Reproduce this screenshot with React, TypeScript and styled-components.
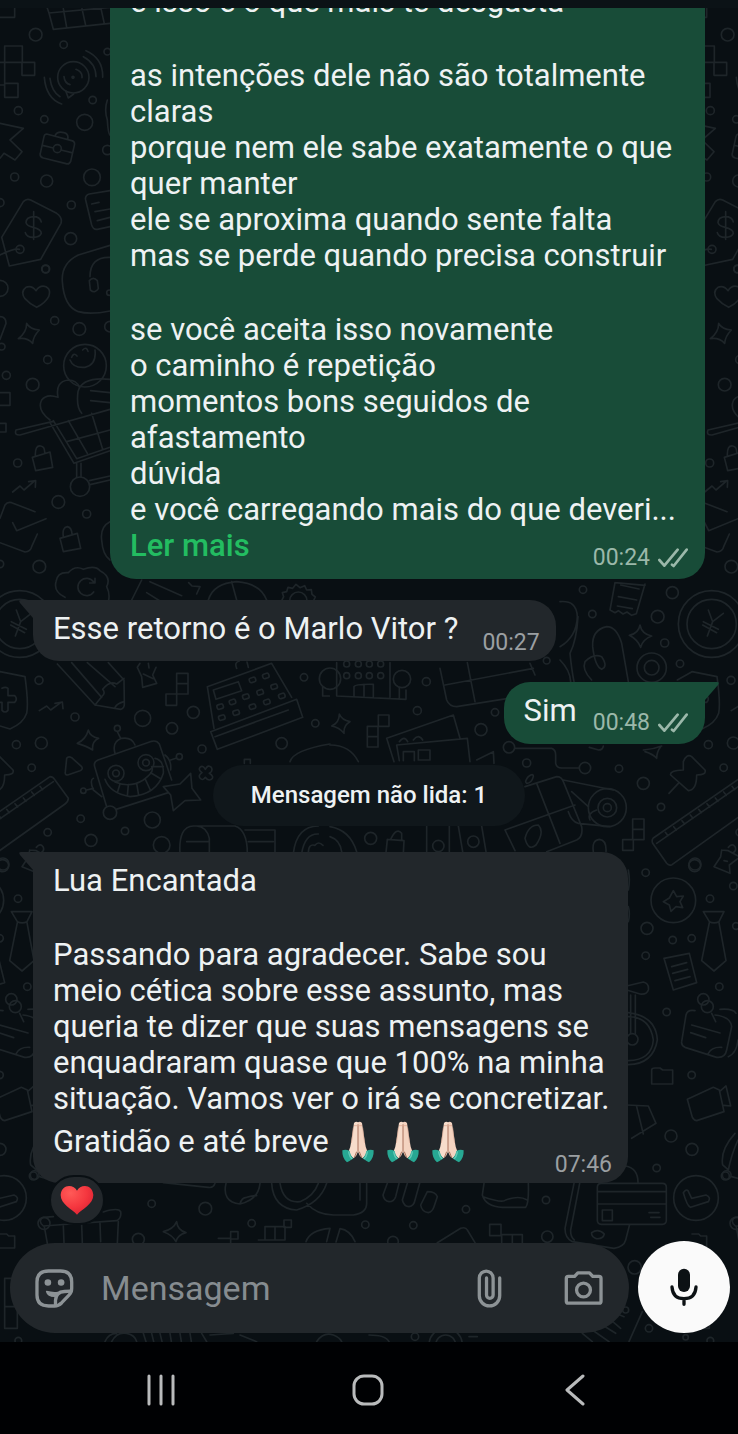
import React from "react";
import styled, { createGlobalStyle } from "styled-components";

const color = {
  page: "#090f13",
  doodle: "#1e2529",
  outgoing: "#184c38",
  incoming: "#22272b",
  text: "#eef2f3",
  mutedOut: "#9bb8aa",
  mutedIn: "#9b9fa2",
  icon: "#8d9396",
  link: "#23bd61",
};

const GlobalStyle = createGlobalStyle`
  * { box-sizing: border-box; }
  body {
    margin: 0;
    background: ${color.page};
    font-family: Roboto, "Liberation Sans", sans-serif;
    color: ${color.text};
  }
  button, input { font: inherit; color: inherit; }
`;

const Screen = styled.div`
  display: flex;
  flex-direction: column;
  height: 100vh;
`;

const TopEdge = styled.div`
  flex: none;
  height: 8px;
  background: #0b1216;
`;

const Chat = styled.main`
  position: relative;
  flex: 1;
  min-height: 0;
  display: flex;
  flex-direction: column;
  overflow: hidden;
`;

const Wallpaper = styled.svg`
  position: absolute;
  inset: 0;
  width: 100%;
  height: 100%;
  fill: none;
  stroke: ${color.doodle};
  stroke-width: 5;
  stroke-linecap: round;
  stroke-linejoin: round;
`;

const Messages = styled.section`
  position: relative;
  flex: 1;
  min-height: 0;
  display: flex;
  flex-direction: column;
  justify-content: flex-end;
  gap: 21px;
  padding: 0 33px 58px;
`;

const Bubble = styled.article<{ $out?: boolean; $wide?: boolean; $inline?: boolean }>`
  position: relative;
  flex: none;
  display: flex;
  flex-direction: ${(p) => (p.$inline ? "row" : "column")};
  align-items: ${(p) => (p.$inline ? "flex-end" : "stretch")};
  gap: ${(p) => (!p.$inline ? 0 : p.$out ? 16 : 24)}px;
  align-self: ${(p) => (p.$out ? "flex-end" : "flex-start")};
  width: ${(p) => (p.$wide ? "calc(100% - 77px)" : "auto")};
  padding: ${(p) => (p.$out ? "11px 17px 7px 20px" : "11px 16px 4px 20px")};
  border-radius: 26px;
  border-top-left-radius: ${(p) => (p.$out ? 26 : 0)}px;
  border-top-right-radius: ${(p) => (p.$out ? 0 : 26)}px;
  background: ${(p) => (p.$out ? color.outgoing : color.incoming)};
`;

const TailShape = styled.svg<{ $out?: boolean }>`
  position: absolute;
  top: 0;
  ${(p) => (p.$out ? "left: 100%;" : "right: 100%; transform: scaleX(-1);")}
  width: 14px;
  height: 18px;
  fill: ${(p) => (p.$out ? color.outgoing : color.incoming)};
`;

const Body = styled.div<{ $gap?: number }>`
  font-size: 31px;
  line-height: 36px;
  margin-bottom: ${(p) => p.$gap ?? -20}px;
`;

const Stanza = styled.p`
  margin: 0 0 38px;
  white-space: pre-line;
  &:last-child { margin-bottom: 0; }
`;

const ReadMore = styled.button`
  display: block;
  padding: 0;
  border: 0;
  background: none;
  color: ${color.link};
  font-weight: 500;
  line-height: 36px;
  cursor: pointer;
`;

const Meta = styled.footer<{ $out?: boolean }>`
  display: flex;
  align-items: center;
  justify-content: flex-end;
  gap: 8px;
  font-size: 23px;
  line-height: 28px;
  color: ${(p) => (p.$out ? color.mutedOut : color.mutedIn)};
`;

const UnreadPill = styled.div`
  flex: none;
  align-self: center;
  margin-bottom: 5px;
  padding: 16px 38px 17px;
  border-radius: 31px;
  background: #10171b;
  font-size: 24px;
  font-weight: 500;
  line-height: 28px;
`;

const Reaction = styled.button`
  position: absolute;
  left: 16px;
  top: calc(100% - 8px);
  display: grid;
  place-items: center;
  width: 56px;
  height: 50px;
  padding: 0;
  border: 2px solid ${color.page};
  border-radius: 25px;
  background: ${color.incoming};
`;

const Hands = styled.svg`
  width: 45px;
  height: 42px;
  margin: 4px 0 8px;
  vertical-align: middle;
`;

const Composer = styled.form`
  position: relative;
  flex: none;
  display: flex;
  align-items: flex-end;
  gap: 9px;
  padding: 0 8px 9px 10px;
`;

const InputBar = styled.div`
  flex: 1;
  min-width: 0;
  height: 90px;
  display: flex;
  align-items: center;
  padding: 0 24px 0 22px;
  border-radius: 45px;
  background: ${color.incoming};
`;

const TextField = styled.input`
  flex: 1;
  min-width: 0;
  margin: 0 22px 0 25px;
  padding: 0;
  border: 0;
  outline: 0;
  background: none;
  font-size: 34px;
  line-height: 44px;
  &::placeholder { color: #868c90; opacity: 1; }
`;

const IconButton = styled.button`
  flex: none;
  display: grid;
  place-items: center;
  width: 44px;
  height: 44px;
  padding: 0;
  border: 0;
  background: none;
  color: ${color.icon};
  & + & { margin-left: 50px; }
`;

const MicButton = styled.button`
  flex: none;
  display: grid;
  place-items: center;
  width: 92px;
  height: 92px;
  padding: 0;
  border: 0;
  border-radius: 50%;
  background: #fafafa;
  color: #0c1114;
`;

const SystemNav = styled.nav`
  flex: none;
  display: flex;
  height: 92px;
  padding: 3px 60px 0 57px;
  background: #000103;
`;

const NavButton = styled.button`
  flex: 1;
  display: grid;
  place-items: center;
  padding: 0;
  border: 0;
  background: none;
  color: #b9bbbc;
`;

const LineIcon = styled.svg`
  fill: none;
  stroke: currentColor;
  stroke-linecap: round;
  stroke-linejoin: round;
`;

type Patch = {
  x: number;
  y: number;
  circles: number[][];
  paths: string[];
};

/* Each patch of the wallpaper is drawn on a grid three times finer than the page. */
const patches: Patch[] = [
  {
    x: 0,
    y: 0,
    circles: [
      [107, 104, 19], [191, 134, 11], [55, 332, 12], [133, 358, 11], [254, 367, 24], [44, 531, 12],
      [140, 543, 18], [276, 532, 25], [214, 615, 12], [212, 716, 18], [137, 807, 12], [278, 300, 11],
      [322, 155, 10], [322, 450, 14], [0, 608, 12], [0, 865, 24], [220, 232, 47], [219, 232, 3],
      [172, 446, 12], [60, 748, 12],
    ],
    paths: [
      "M142 25l5 14L330 22M147 39L160 88L330 70M190 26L200 82M246 26L257 76M303 26l10 45M0 52H44V24",
      "M14 138H67V187H104V226H66V187H14ZM14 187V250H54V292H14V250M0 187H14M14 255H0",
      "M197 272l8 22l16-12M258 152Q310 175 308 232M250 170Q288 190 288 230M133 232Q138 295 185 312M150 235Q155 275 180 290M228 208q20 8 18 25M192 230q2 20 18 24",
      "M140 402L215 422Q226 425 223 436L212 484Q208 494 198 491L130 474Q118 470 121 460L132 410Q134 402 140 402ZM165 407Q172 392 192 398Q207 402 203 418M128 436L160 444M183 450L215 458",
      "M0 370L70 385L30 420L66 455L45 480L12 460L0 475",
      "M92 600L170 640Q188 652 183 670L122 778L28 798L5 712L70 605Q80 594 92 600ZM124 666Q120 650 100 650Q78 652 78 668Q80 678 100 682Q124 688 124 700Q120 712 100 712Q80 712 76 698M101 635V718M58 748Q40 745 0 765",
      "M330 572L268 582Q254 586 257 600L275 675Q280 690 292 688L330 680M275 612l22-5M285 635l45-8M292 662l38-10",
      "M322 300q-10 30 0 60q2 40 8 45",
    ],
  },
  {
    x: 0,
    y: 250,
    circles: [
      [137, 57, 11], [164, 212, 12], [238, 237, 19], [143, 329, 12], [98, 404, 19], [19, 376, 12],
      [53, 639, 12], [175, 756, 19], [260, 792, 12], [118, 950, 19], [0, 942, 11], [328, 128, 8],
      [330, 230, 16], [255, 347, 64], [240, 710, 29], [5, 290, 10],
    ],
    paths: [
      "M330-14L235 15Q183 40 187 95Q192 170 235 185Q270 195 330 183M330 22Q270 20 270 80M268 92q12-14 24 0l3 24q-10 16-24 4Z",
      "M108 122Q95 105 78 112Q60 125 75 146Q90 163 110 172Q135 160 146 140Q154 118 138 110Q120 104 108 122Z",
      "M80 220Q90 238 118 240Q100 258 98 280Q82 262 55 266Q80 248 80 220ZM0 200Q18 200 18 220L0 268",
      "M0 428H30V466H0M0 520H18V546H0",
      "M210 330Q220 355 255 352Q290 345 285 300M215 322q6-16 16-4M248 300q12-12 16 4",
      "M150 510Q110 480 125 450Q140 430 174 442Q165 395 205 390Q230 390 238 412M330 388Q245 380 234 425Q228 470 245 490M272 422l58 6M272 452l58 6",
      "M330 478L60 555Q42 556 48 540L160 514M150 518L222 640L330 602M160 512L230 626L330 592M205 512L262 610M275 490L308 598M200 575L330 540M230 640v42M243 640v40M268 692l62-14M270 704l60-14",
      "M97 622L150 606L158 652L107 662ZM106 617Q105 585 122 588Q135 590 134 609",
      "M38 726L60 708L72 720L102 694M86 695L107 692L106 712",
      "M0 805L15 765Q22 755 35 758L105 785M38 818L50 842L138 806M0 878L75 906Q92 905 95 890L112 852",
      "M180 865L232 850L242 895L190 905ZM190 860Q186 832 202 830Q215 832 216 853",
      "M195 1042Q160 1025 168 995Q172 965 205 968Q225 945 250 958Q285 945 300 962Q335 980 320 1010Q330 1030 326 1050M281 996A26 26 0 1 0 281 1026M285 985v14h-16",
      "M330 815Q300 830 305 870Q308 915 330 930",
    ],
  },
  {
    x: 560,
    y: 480,
    circles: [
      [69, 329, 11], [337, 338, 18], [97, 402, 11], [293, 410, 19], [314, 489, 12], [360, 551, 11],
      [275, 563, 44], [275, 563, 22], [455, 432, 100], [455, 432, 74],
    ],
    paths: [
      "M445 390L458 425L490 400M458 425L442 468M430 425L475 448M428 435L470 458",
      "M165 308L150 390l15 8l10-6l14 10l12-6l14 10l14-5L255 312M182 315l55 12M175 350l55 10M172 378l45 8M165 308l90 8",
      "M240 435Q245 462 275 468Q248 478 242 502Q232 478 208 466Q236 460 240 435Z",
      "M0 365Q50 360 52 410Q50 470 0 500M54 410Q50 480 30 520Q35 570 42 605",
      "M205 605L185 490Q170 440 140 440Q95 450 98 500Q105 560 125 568Q145 560 125 530Q100 520 75 545Q65 570 95 600",
      "M352 600L396 575",
    ],
  },
  {
    x: 0,
    y: 580,
    circles: [
      [117, 301, 12], [225, 411, 12], [49, 494, 12], [124, 489, 18], [95, 563, 11], [428, 415, 24],
      [516, 445, 17], [580, 397, 18], [606, 507, 12], [352, 445, 9], [538, 530, 9], [250, 632, 8],
      [330, 698, 20], [457, 720, 24], [375, 753, 11], [242, 716, 11], [143, 757, 11], [273, 781, 18],
      [485, 795, 25], [912, 292, 11], [845, 490, 17], [946, 430, 11], [348, 580, 24], [348, 580, 10],
      [438, 548, 24], [438, 548, 10], [895, 62, 26], [990, 296, 32],
    ],
    paths: [
      "M0 275L75 290Q86 370 80 400Q70 430 30 447L0 438M6 325q10-6 18 0v22h20q10 10 0 20h-20v24q-9 10-18 0v-24h-6",
      "M118 392l22-14l12 12l30-22M165 370l22-4l2 20",
      "M172 252L285 375L362 388Q374 385 373 370L372 300L325 248M215 248L305 352M262 248L345 320M285 375L305 350Q318 340 308 328Q330 300 350 312L372 295M345 382Q352 370 372 365",
      "M412 262L425 290L428 322L470 310L458 285L468 262M420 250l-8 12M445 250l2 14M430 282l30 14",
      "M530 280h34v62h-34zM530 311h34M498 342h32v34h-32z",
      "M642 445L622 320L815 250L875 352M632 455L652 508L908 412L890 358ZM645 470L865 390M640 330L715 305L725 332L648 358ZM710 265q-8-18 8-22M745 262l-4-16",
      "M265 450Q270 470 296 475Q275 485 278 510Q260 498 232 490Q258 478 265 450Z",
      "M200 535Q205 528 215 533L245 560Q250 568 240 572L203 585Q194 585 196 575Z",
      "M320 680L284 560Q280 546 294 540L455 484Q470 480 478 492L515 600M348 688L505 638M345 520Q335 485 365 475Q395 470 405 495M352 455L362 475",
      "M315 598Q330 640 390 650Q470 645 490 580Q492 540 465 535M345 606Q390 625 430 600Q465 575 455 560M360 612l-8 26M385 614l-3 34M410 610l6 36M435 596l16 34M452 578l30 18M458 560h32M280 595Q268 600 280 630L305 650M260 630l20-5M495 525Q515 540 512 570M512 540l18-6",
      "M520 692L512 645L490 620L540 612L572 580L576 625L602 660L555 662Z",
      "M600 562q8-8 16 6q8-16 18-6q6 12-6 18q16 10 6 18q-10 6-18-6q-8 12-16 2q-6-8 6-16q-12-8-6-16",
      "M-116 774L150 590Q160 590 165 600L205 655Q205 665 195 672L-60 854Q-70 858 -76 850L-118 790Q-122 780 -116 774M-106 790L160 605M-80 757l8 10M-55 740l8 10M-30 722l8 10M-5 705l8 10M20 688l8 10M45 671l8 10M70 654l8 10M95 636l8 10M120 619l8 10",
      "M540 820Q535 740 580 738H705Q742 750 742 820M628 820V775Q620 740 590 738M560 785h65M735 750h90v70M745 785h75M880 820Q890 738 955 738M905 820Q915 760 955 762M925 820q0-30 20-24q10-14 24 0",
      "M395 60L425 0M440 38l40 25M450 5l95 42M590 42l10-22l-24-2l-10-10M625 60Q640 10 710 5Q780 10 800 60M695 5l15 55",
      "M845 62l6-12l-4-12l13-3l4-13l14 3l10-12l12 10l14-6l6 13l14-1l2 14l10 8l-6 12",
      "M870 545Q880 510 990 492M733 550v-12h18v12M968 320v28h20",
    ],
  },
  {
    x: 330,
    y: 640,
    circles: [
      [289, 125, 12], [262, 212, 12], [453, 269, 18], [537, 322, 17], [495, 217, 11], [590, 369, 12],
      [765, 384, 17], [940, 430, 18], [993, 501, 11], [867, 386, 11], [122, 595, 18], [325, 618, 17],
      [430, 605, 17], [832, 503, 57], [832, 503, 28], [832, 503, 12], [1095, 672, 18], [216, 117, 26],
      [50, 72, 9], [85, 72, 9], [118, 72, 9], [152, 72, 9], [50, 107, 9], [85, 107, 9],
      [118, 107, 9], [152, 107, 9], [650, 62, 10],
    ],
    paths: [
      "M20 68V168L228 178V150M180 68V172M208 142v34M72 168V140Q75 132 130 133V170M102 133v35",
      "M330 85L350 180Q358 200 380 200L535 175M345 135L610 85M412 68L435 185M600 70L615 105M690 60q30 30 32 65",
      "M28 222Q35 240 60 245Q40 255 42 280Q28 262 5 258Q28 248 28 222Z",
      "M145 225h32v34h-32zM112 259h32v62h-32zM112 290h32",
      "M192 365L170 295L370 225L390 295M208 362L200 315L412 295L420 365M220 362v-27h33v27M265 330h35v30h-35zM208 305q15-20 25 0M250 300q15-20 28 0M0 315Q60 315 85 365M440 360L490 335L492 370",
      "M555 325H665Q677 328 677 345V370Q680 384 695 384H748",
      "M585 440L680 410Q695 410 700 425L755 560Q760 590 740 600L650 635M620 430L690 610M525 570L735 495M525 570L555 632M585 595Q595 555 625 555Q645 575 618 615Q595 635 585 595",
      "M700 420L850 450M725 455L775 500M715 515Q725 545 745 550L840 560M780 540q-10-20 20-30",
      "M1060 365Q1070 340 1085 350L1125 390Q1130 405 1100 405Q1100 450 1075 452L1022 405Q1018 392 1060 390ZM1045 430l-28 30",
      "M908 537h34v62h-34zM908 568h34M878 599h32v32h-32zM590 430q-8-5 5-20q15-12 15 0q-5 20-20 20",
      "M940 330q30-2 55-12M945 335q25 8 35 20q0-20 12-35M778 322l28 8q12 0 14-12",
      "M290 558V635M358 558V635M385 558L398 635M455 558L468 635M172 598L222 602L220 640M172 598l-4 40M182 598Q200 560 215 580V600M790 635Q785 600 808 598Q830 600 828 635",
      "M0 560Q60 570 80 635M0 590Q30 600 35 635",
    ],
  },
  {
    x: 600,
    y: 840,
    circles: [
      [137, 98, 11], [284, 77, 18], [330, 176, 11], [141, 265, 18], [218, 300, 11], [275, 295, 11],
      [137, 347, 11], [358, 440, 11], [200, 516, 11], [275, 705, 11], [213, 888, 18], [276, 928, 18],
      [170, 984, 11], [400, 138, 11], [408, 258, 10], [220, 181, 67], [288, 1074, 67], [97, 598, 17],
      [408, 1150, 18], [310, 478, 17], [322, 500, 18], [380, 1005, 13],
    ],
    paths: [
      "M220 152L230 170L250 168L240 185L248 203L228 200L213 214L208 195L190 185L208 174Z",
      "M310 215H372L357 245Q342 252 328 245ZM328 248L305 362L342 393L378 362L357 248",
      "M192 355L268 340L290 428L220 450ZM215 380l45-12M218 400l45-12M225 422l45-12",
      "M92 465V580M106 465V580M80 438L130 426Q148 430 145 450Q140 465 120 462L80 450M85 530Q150 530 160 600Q155 660 85 662M85 518Q168 528 172 600Q160 672 85 674",
      "M285 512Q262 508 258 525L245 605Q243 615 255 622L350 652Q375 655 380 630L395 560Q392 530 345 525M275 555l85 24M272 578l45 15M325 640q10-20 40-18M335 520l12 25M360 508Q400 505 408 520M385 650Q410 640 414 600",
      "M155 690Q155 684 165 684L180 684L188 690H218V732H155Z",
      "M262 778L340 742L358 750L372 815L290 842Q278 840 275 825ZM362 752L378 738L392 798L372 796",
      "M80 795L145 798L168 850L95 895M110 800L130 882",
      "M405 880Q360 930 368 975L385 990Q395 940 414 900M395 1010l19 5",
      "M250 1058Q258 1046 264 1052L275 1075L318 1065Q334 1072 325 1085L272 1102Q262 1100 250 1058Z",
      "M385 22q12-14 20-2q6 12-6 18M365 30L385 32L414 48M365 30L362 50L342 80L390 100L388 75L414 55M372 62l10 2",
      "M85 90q6 30 0 60M85 200q6 20 0 45",
    ],
  },
  {
    x: 369,
    y: 1100,
    circles: [
      [531, 300, 11], [291, 328, 11], [133, 376, 11], [72, 425, 16], [535, 410, 17], [797, 502, 20],
      [840, 685, 11], [770, 630, 9], [138, 710, 11], [950, 712, 8], [1024, 722, 10], [230, 735, 30],
      [230, 735, 50],
    ],
    paths: [
      "M697 250H880Q892 250 892 262V361Q892 373 880 373H697Q685 373 685 361V262Q685 250 697 250ZM685 275H892M685 312H892M700 330h30v32h-30zM840 338h30M845 352h28",
      "M615 250L588 385Q588 415 610 425L735 445Q765 440 770 420L782 373M632 250L605 390Q604 410 616 420M668 398q20-14 38 4q-4 16-24 14q-16-6-14-18M770 198Q808 205 807 250",
      "M55 250L42 285Q45 303 60 305Q75 305 80 290L90 250M115 250L100 300Q105 320 120 320Q135 318 138 300L152 250M175 275L155 315Q158 335 178 338Q190 335 195 320L205 290Q200 275 175 275Z",
      "M345 250L340 285Q350 320 400 322H470Q480 310 478 250M342 290Q400 310 410 300Q450 285 475 300",
      "M362 373h34v34h-34zM398 430v-26h62v26M430 404v25M205 428L275 385Q290 380 295 390L318 428",
      "M820 635L780 725M640 700l30 25M670 690l50 35M700 675l40 25M720 655l35 30M740 640l25 10M300 710h25M0 705q50 0 60 20",
    ],
  },
  {
    x: 0,
    y: 1100,
    circles: [
      [455, 311, 11], [616, 326, 19], [755, 370, 11], [1096, 374, 11], [415, 418, 18], [100, 228, 12],
    ],
    paths: [
      "M160 350L130 352Q112 362 130 378L350 362Q365 355 362 335Q355 322 310 336M133 380L142 430M355 365L352 430M190 378l2 50M245 374l2 55M300 370l2 55",
      "M530 365Q532 390 558 398Q532 405 528 425Q518 405 490 395Q520 388 530 365Z",
      "M655 415h37v15M692 395h22v22h-22zM795 380h60v40h-60zM825 380v40M775 420h20M852 360h22v22h-22z",
      "M918 425Q930 390 990 385L980 425M1065 425Q1050 390 1020 386L1008 426",
      "M490 248L625 262Q640 265 645 250M678 250Q665 305 720 312Q775 300 780 250M720 312q5-20 20-20q15-5 30-5",
      "M815 250Q820 325 890 330Q960 310 980 250M840 250Q850 310 900 305Q940 290 955 250M920 310Q950 345 1000 345H1060Q1100 340 1100 310V250M1080 250V300",
      "M14 535V685H52V620H14M14 535h20M0 402h20l6 6h18v36H0",
      "M315 725Q325 700 350 700M335 725Q350 695 380 700Q405 705 410 725M430 700l8 25M455 700l6 25M480 700l6 25M510 700l4 25M540 700l4 25M570 700l4 25M605 700l15 25M630 705l70-5M720 705l50 20M950 725q20-30 50-20q20 8 25 20",
    ],
  },
];

const registerKeys = [
  [660, 380], [697, 366], [737, 350], [780, 337], [822, 320], [665, 413],
  [708, 398], [757, 380], [800, 366], [845, 348], [757, 300], [797, 288],
];

function ChatWallpaper() {
  return (
    <Wallpaper aria-hidden="true">
      <defs>
        <g id="doodles">
          {patches.map((patch, i) => (
            <g key={i} transform={`translate(${patch.x} ${patch.y - 8}) scale(0.33333)`}>
              {patch.circles.map(([cx, cy, r], j) => (
                <circle key={j} cx={cx} cy={cy} r={r} />
              ))}
              <path d={patch.paths.join("")} />
            </g>
          ))}
          <g transform="translate(0 572) scale(0.33333)">
            {registerKeys.map(([x, y]) => (
              <rect key={`${x}-${y}`} x={x - 9} y={y - 7} width="19" height="14" rx="5" transform={`rotate(-18 ${x} ${y})`} />
            ))}
          </g>
        </g>
      </defs>
      <use href="#doodles" x="-692" />
      <use href="#doodles" />
      <use href="#doodles" x="692" />
    </Wallpaper>
  );
}

function Tail({ out }: { out?: boolean }) {
  return (
    <TailShape $out={out} viewBox="0 0 14 18" aria-hidden="true">
      <path d="M0 0H12Q15 0 13 3L0 18Z" />
    </TailShape>
  );
}

function DoubleCheck() {
  return (
    <LineIcon width="30" height="20" viewBox="0 0 90 60" strokeWidth="8" role="img" aria-label="Entregue">
      <path d="M4 36L19 53L59 5M42 50L47 54L86 5" />
    </LineIcon>
  );
}

function FoldedHands() {
  return (
    <Hands viewBox="0 0 135 126" role="img" aria-label="mãos juntas">
      <path d="M54 6Q60 0 66 4L66 92Q62 106 52 112L36 96Q44 80 46 60Z" fill="#f7dccb" />
      <path d="M78 6Q72 0 66 4L66 92Q70 106 80 112L96 96Q88 80 86 60Z" fill="#f4d3c0" />
      <path d="M66 10V92M62 92L55 110M70 92L77 110" stroke="#a8705a" strokeWidth="3" fill="none" />
      <path d="M52 20Q49 50 46 66M80 20Q83 50 86 66" stroke="#d9a892" strokeWidth="2" fill="none" />
      <path d="M54 14h10M68 14h10" stroke="#e5b29c" strokeWidth="3" />
      <path d="M19 88Q30 84 41 90Q44 106 52 112Q42 120 33 124Q18 112 19 88Z" fill="#27a893" />
      <path d="M113 88Q102 84 91 90Q88 106 80 112Q90 120 99 124Q114 112 113 88Z" fill="#27a893" />
      <path d="M38 91Q40 108 49 114M94 91Q92 108 83 114" stroke="#65cbb8" strokeWidth="4" fill="none" />
    </Hands>
  );
}

function Heart() {
  return (
    <svg width="34" height="30" viewBox="0 0 102 90" aria-hidden="true">
      <defs>
        <radialGradient id="heartFill" cx="0.3" cy="0.25" r="0.9">
          <stop offset="0" stopColor="#ff5a57" />
          <stop offset="0.55" stopColor="#f5373f" />
          <stop offset="1" stopColor="#d81f30" />
        </radialGradient>
      </defs>
      <path d="M51 17C42-3 4-5 2 30C2 58 36 72 51 89C66 72 100 58 100 30C98-5 60-3 51 17Z" fill="url(#heartFill)" />
    </svg>
  );
}

export default function App() {
  return (
    <Screen>
      <GlobalStyle />
      <TopEdge />
      <Chat>
        <ChatWallpaper />
        <Messages>
          <Bubble $out $wide>
            <Body>
              <Stanza>e isso é o que mais te desgasta</Stanza>
              <Stanza>
                {`as intenções dele não são totalmente claras
                porque nem ele sabe exatamente o que quer manter
                ele se aproxima quando sente falta
                mas se perde quando precisa construir`}
              </Stanza>
              <Stanza as="div">
                {`se você aceita isso novamente
                o caminho é repetição
                momentos bons seguidos de afastamento
                dúvida
                e você carregando mais do que deveri...`}
                <ReadMore type="button">Ler mais</ReadMore>
              </Stanza>
            </Body>
            <Meta $out>
              <time>00:24</time>
              <DoubleCheck />
            </Meta>
          </Bubble>

          <Bubble $inline>
            <Tail />
            <Body $gap={10}>Esse retorno é o Marlo Vitor ?</Body>
            <Meta>
              <time>00:27</time>
            </Meta>
          </Bubble>

          <Bubble $out $inline>
            <Tail out />
            <Body $gap={8}>Sim</Body>
            <Meta $out>
              <time>00:48</time>
              <DoubleCheck />
            </Meta>
          </Bubble>

          <UnreadPill role="status">Mensagem não lida: 1</UnreadPill>

          <Bubble $wide>
            <Tail />
            <Body>
              <Stanza>Lua Encantada</Stanza>
              <Stanza>
                Passando para agradecer. Sabe sou meio cética sobre esse assunto, mas queria te dizer que suas
                mensagens se enquadraram quase que 100% na minha situação. Vamos ver o irá se concretizar.{"\n"}
                Gratidão e até breve <FoldedHands />
                <FoldedHands />
                <FoldedHands />
              </Stanza>
            </Body>
            <Meta>
              <time>07:46</time>
            </Meta>
            <Reaction type="button" aria-label="Reação: coração">
              <Heart />
            </Reaction>
          </Bubble>
        </Messages>

        <Composer onSubmit={(e) => e.preventDefault()}>
          <InputBar>
            <IconButton type="button" aria-label="Figurinhas">
              <LineIcon width="41" height="41" viewBox="0 0 124 124" strokeWidth="10">
                <path d="M44 9H80Q114 9 114 42V62Q114 74 105 83L84 105Q74 115 62 115H44Q9 115 9 82V42Q9 9 44 9Z" />
                <path d="M65 112V98Q66 72 92 71L112 70" />
                <path d="M38 71Q42 86 62 86L72 74Q55 76 38 71Z" fill="currentColor" strokeWidth="4" />
                <circle cx="42" cy="44" r="10" fill="currentColor" stroke="none" />
                <circle cx="82" cy="44" r="10" fill="currentColor" stroke="none" />
              </LineIcon>
            </IconButton>
            <TextField type="text" placeholder="Mensagem" aria-label="Mensagem" />
            <IconButton type="button" aria-label="Anexar">
              <LineIcon width="27" height="41" viewBox="0 0 82 124" strokeWidth="10">
                <path d="M72 30V84A31 31 0 0 1 10 84V30A21 21 0 0 1 52 30V82A10 10 0 0 1 32 82V30" />
              </LineIcon>
            </IconButton>
            <IconButton type="button" aria-label="Câmera">
              <LineIcon width="41" height="36" viewBox="0 0 124 108" strokeWidth="10">
                <path d="M16 19H35L45 8H80L90 19H109Q115 19 115 25V94Q115 100 109 100H16Q10 100 10 94V25Q10 19 16 19Z" />
                <circle cx="62" cy="60" r="21" />
              </LineIcon>
            </IconButton>
          </InputBar>
          <MicButton type="button" aria-label="Gravar mensagem de voz">
            <LineIcon width="28" height="38" viewBox="0 0 84 114" strokeWidth="10">
              <rect x="24" y="2" width="36" height="70" rx="18" fill="currentColor" stroke="none" />
              <path d="M6 57Q8 92 42 92Q76 92 78 57M42 92V109" />
            </LineIcon>
          </MicButton>
        </Composer>
      </Chat>

      <SystemNav aria-label="Navegação do sistema">
        <NavButton type="button" aria-label="Recentes">
          <LineIcon width="30" height="32" viewBox="0 0 30 32" strokeWidth="3">
            <path d="M3 2V30M15 2V30M27 2V30" />
          </LineIcon>
        </NavButton>
        <NavButton type="button" aria-label="Início">
          <LineIcon width="32" height="32" viewBox="0 0 32 32" strokeWidth="3">
            <rect x="2" y="2" width="28" height="28" rx="10" />
          </LineIcon>
        </NavButton>
        <NavButton type="button" aria-label="Voltar">
          <LineIcon width="20" height="32" viewBox="0 0 20 32" strokeWidth="3">
            <path d="M18 2L2 16L18 30" />
          </LineIcon>
        </NavButton>
      </SystemNav>
    </Screen>
  );
}
